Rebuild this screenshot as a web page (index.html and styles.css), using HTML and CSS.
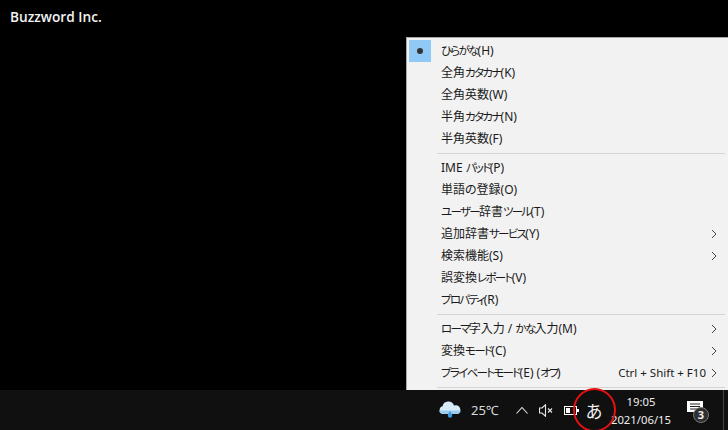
FILE: index.html
```html
<!DOCTYPE html>
<html lang="ja">
<head>
<meta charset="utf-8">
<title>IME menu</title>
<link rel="stylesheet" href="styles.css">
</head>
<body>
<div class="screen">
  <main class="desktop">
    <div class="brand">Buzzword Inc.</div>
    <nav class="menu">
      <ul class="group">
        <li class="item"><span class="check"><span class="dot"></span></span><span class="label"><span class="k">ひらがな</span>(H)</span></li>
        <li class="item"><span class="check"></span><span class="label">全角<span class="k">カタカナ</span>(K)</span></li>
        <li class="item"><span class="check"></span><span class="label">全角英数(W)</span></li>
        <li class="item"><span class="check"></span><span class="label">半角<span class="k">カタカナ</span>(N)</span></li>
        <li class="item"><span class="check"></span><span class="label">半角英数(F)</span></li>
      </ul>
      <ul class="group">
        <li class="item"><span class="check"></span><span class="label">IME <span class="k">パッド</span>(P)</span></li>
        <li class="item"><span class="check"></span><span class="label">単語の登録(O)</span></li>
        <li class="item"><span class="check"></span><span class="label"><span class="k">ユーザー</span>辞書<span class="k">ツール</span>(T)</span></li>
        <li class="item"><span class="check"></span><span class="label">追加辞書<span class="k">サービス</span>(Y)</span><svg class="chev" viewBox="0 0 6 10"><path d="M1 1l4 4-4 4"/></svg></li>
        <li class="item"><span class="check"></span><span class="label">検索機能(S)</span><svg class="chev" viewBox="0 0 6 10"><path d="M1 1l4 4-4 4"/></svg></li>
        <li class="item"><span class="check"></span><span class="label">誤変換<span class="k">レポート</span>(V)</span></li>
        <li class="item"><span class="check"></span><span class="label"><span class="k">プロパティ</span>(R)</span></li>
      </ul>
      <ul class="group">
        <li class="item"><span class="check"></span><span class="label"><span class="k">ローマ</span>字入力 / <span class="k">かな</span>入力(M)</span><svg class="chev" viewBox="0 0 6 10"><path d="M1 1l4 4-4 4"/></svg></li>
        <li class="item"><span class="check"></span><span class="label">変換<span class="k">モード</span>(C)</span><svg class="chev" viewBox="0 0 6 10"><path d="M1 1l4 4-4 4"/></svg></li>
        <li class="item"><span class="check"></span><span class="label"><span class="k">プライベートモード</span>(E) (<span class="k">オフ</span>)</span><span class="shortcut">Ctrl + Shift + F10</span><svg class="chev" viewBox="0 0 6 10"><path d="M1 1l4 4-4 4"/></svg></li>
      </ul>
    </nav>
  </main>
  <footer class="taskbar">
    <svg class="weather" width="24" height="18" viewBox="0 0 24 18">
      <path d="M5 13a4 4 0 0 1-.5-7.800A6 6 0 0 1 16 4.500a4.200 4.200 0 0 1 3.500 8.500z" fill="#d6ebfa"/>
      <path d="M5 13a4 4 0 0 1-3.800-3.500h21.600A4.200 4.200 0 0 1 19 13z" fill="#9ccbec"/>
      <path d="M12 10c1.300 2 2.200 3.200 2.200 4.500a2.200 2.200 0 0 1-4.400 0c0-1.300.9-2.500 2.200-4.500z" fill="#3f9be0"/>
    </svg>
    <span class="temp">25℃</span>
    <svg class="tray-up" width="12" height="8" viewBox="0 0 12 8"><path d="M.5 7.500l5.500-6 5.500 6"/></svg>
    <svg class="tray-vol" width="14" height="13" viewBox="0 0 14 13">
      <path d="M.5 4h2.500L6.500.8v11.400L3 9H.5z"/>
      <path d="M9 4.500l4 4M13 4.500l-4 4"/>
    </svg>
    <svg class="tray-bat" width="15" height="9" viewBox="0 0 15 9">
      <rect x="0.500" y="0.500" width="12" height="8" fill="none" stroke="#fff"/>
      <rect x="2" y="2" width="4" height="5" fill="#fff"/>
      <rect x="13" y="3" width="2" height="3" fill="#fff"/>
    </svg>
    <span class="ime">あ</span>
    <div class="clock"><span>19:05</span><span>2021/06/15</span></div>
    <div class="notify">
      <svg width="16" height="15" viewBox="0 0 16 15">
        <path d="M0 0h16v11h-5l-3 3v-3H0z" fill="#fff"/>
        <path d="M3 3h10M3 5.500h10M3 8h7" stroke="#222" fill="none"/>
      </svg>
      <span class="badge">3</span>
    </div>
    <div class="edge"></div>
  </footer>
  <div class="ring"></div>
</div>
</body>
</html>
```
FILE: styles.css
```css
* { box-sizing: border-box; }
html, body { margin: 0; padding: 0; background: #000; }
.screen {
  position: relative;
  width: 728px;
  height: 430px;
  overflow: hidden;
  display: flex;
  flex-direction: column;
  font-family: "Noto Sans", "Noto Sans CJK JP", sans-serif;
  font-feature-settings: "palt";
}
.desktop { position: relative; flex: 1; background: #000; }
.brand {
  padding: 8px 0 0 10px;
  font: 600 13.700px/18px "Open Sans", "Noto Sans", sans-serif;
  color: #f2f2f2;
}
.menu {
  position: absolute;
  left: 406px;
  top: 37px;
  width: 322px;
  height: 353px;
  padding: 2px 0 0 2px;
  background: #f2f2f2;
  border-top: 1px solid #a8a8a8;
  border-left: 1px solid #a8a8a8;
}
.group { list-style: none; margin: 0; padding: 0 0 3px; }
.group + .group { padding-top: 4px; position: relative; }
.group + .group::before {
  content: "";
  position: absolute;
  left: 28px;
  right: 3px;
  top: 0;
  height: 1px;
  background: #d4d4d4;
}
.group:last-child::after {
  content: "";
  display: block;
  height: 1px;
  margin: 3px 3px 0 28px;
  background: #d4d4d4;
}
.item {
  display: flex;
  align-items: center;
  height: 22px;
  font-size: 12px;
  color: #1a1a1a;
}
.check {
  width: 22px;
  height: 22px;
  margin-right: 10px;
  display: flex;
  align-items: center;
  justify-content: center;
}
.check:has(.dot) { background: #90c8f6; }
.dot { width: 6px; height: 6px; border-radius: 50%; background: #333; }
.label { flex: 1; white-space: nowrap; padding-bottom: 2px; }
.k { font-size: 11.500px; letter-spacing: -1.700px; }
.shortcut { font-size: 11.500px; margin-right: 5px; white-space: nowrap; padding-bottom: 2px; }
.chev { width: 6px; height: 10px; margin-right: 11px; }
.chev path { fill: none; stroke: #444; stroke-width: 1; }
.taskbar {
  height: 40px;
  flex: none;
  display: flex;
  align-items: center;
  background: #101010;
  color: #e6e6e6;
  padding-left: 438px;
}
.weather { margin-right: 9px; }
.temp { font-size: 13px; width: 45px; color: #d8d8d8; }
.tray-up { margin-right: 11px; }
.tray-up path, .tray-vol path { fill: none; stroke: #e8e8e8; stroke-width: 1.100; }
.tray-vol { margin-right: 11px; }
.tray-bat { margin-right: 2px; }
.ime { font-size: 17px; width: 26px; text-align: center; color: #f0f0f0; }
.clock {
  width: 66px;
  margin-left: 1px;
  display: flex;
  flex-direction: column;
  align-items: center;
  gap: 3px;
  font-size: 11.300px;
  line-height: 15px;
  color: #eee;
  white-space: nowrap;
}
.notify { position: relative; margin-left: 13px; width: 24px; height: 24px; padding-top: 1px; }
.badge {
  position: absolute;
  left: 6px;
  top: 9px;
  width: 16px;
  height: 16px;
  border-radius: 50%;
  background: #2f2f2f;
  border: 1px solid #777;
  font-size: 11px;
  font-weight: 700;
  line-height: 14px;
  text-align: center;
  color: #f0f0f0;
}
.edge { margin-left: auto; margin-right: 4px; width: 1px; height: 40px; background: #444; }
.ring {
  position: absolute;
  left: 573px;
  top: 388px;
  width: 43px;
  height: 44px;
  border: 2px solid #e81010;
  border-radius: 50%;
}
```
